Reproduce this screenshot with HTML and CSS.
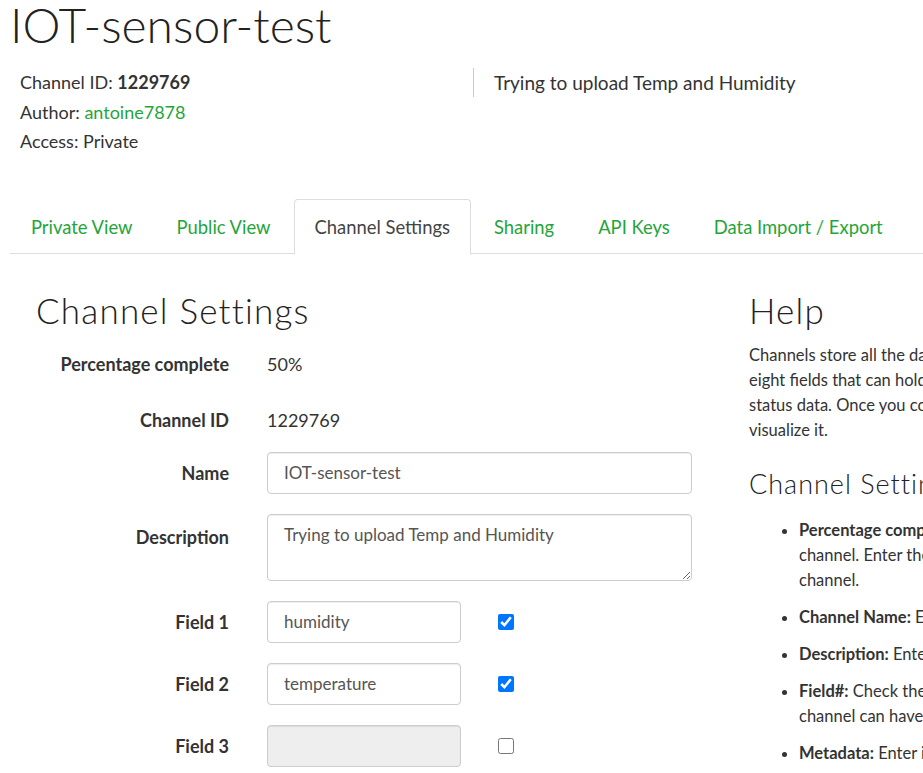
FILE: index.html
```html
<!DOCTYPE html>
<html>
<head>
<meta charset="utf-8">
<link rel="stylesheet" href="styles.css">
</head>
<body>
<div class="page">
  <h1 class="title">IOT-sensor-test</h1>
  <div class="meta">
    <div class="meta-left">
      <p>Channel ID: <b>1229769</b></p>
      <p>Author: <a class="green" href="#">antoine7878</a></p>
      <p>Access: Private</p>
    </div>
    <div class="meta-right">Trying to upload Temp and Humidity</div>
  </div>
  <ul class="tabs">
    <li><a href="#">Private View</a></li>
    <li><a href="#">Public View</a></li>
    <li class="active"><a href="#">Channel Settings</a></li>
    <li><a href="#">Sharing</a></li>
    <li><a href="#">API Keys</a></li>
    <li><a href="#">Data Import / Export</a></li>
  </ul>
  <div class="content">
    <div class="main">
      <h2 class="heading">Channel Settings</h2>
      <div class="row static">
        <label class="lbl">Percentage complete</label>
        <div class="val">50%</div>
      </div>
      <div class="row static last">
        <label class="lbl">Channel ID</label>
        <div class="val">1229769</div>
      </div>
      <div class="row">
        <label class="lbl">Name</label>
        <input class="input wide" type="text" value="IOT-sensor-test">
      </div>
      <div class="row top">
        <label class="lbl">Description</label>
        <textarea class="input wide area">Trying to upload Temp and Humidity</textarea>
      </div>
      <div class="row">
        <label class="lbl">Field 1</label>
        <input class="input short" type="text" value="humidity">
        <input class="check" type="checkbox" checked>
      </div>
      <div class="row">
        <label class="lbl">Field 2</label>
        <input class="input short" type="text" value="temperature">
        <input class="check" type="checkbox" checked>
      </div>
      <div class="row">
        <label class="lbl">Field 3</label>
        <input class="input short" type="text" disabled>
        <input class="check" type="checkbox">
      </div>
    </div>
    <div class="help">
      <h2 class="heading help-heading">Help</h2>
      <p class="help-text">Channels store all the data that a ThingSpeak application collects. Each channel includes<br>eight fields that can hold any type of data, plus three fields for location data and one for<br>status data. Once you collect data in a channel, you can use ThingSpeak apps to analyze and<br>visualize it.</p>
      <h3 class="subheading">Channel Settings</h3>
      <ul class="help-list">
        <li><b>Percentage complete:</b> Calculated based on data entered into the various fields of a<br>channel. Enter the name, description, location, URL, video, and tags to complete your<br>channel.</li>
        <li><b>Channel Name:</b> Enter a unique name for the ThingSpeak channel.</li>
        <li><b>Description:</b> Enter a description of the ThingSpeak channel.</li>
        <li><b>Field#:</b> Check the box to enable the field, and enter a field name. Each ThingSpeak<br>channel can have up to 8 fields.</li>
        <li><b>Metadata:</b> Enter information about channel data, including JSON, XML, or CSV data.</li>
      </ul>
    </div>
  </div>
</div>
</body>
</html>
```

FILE: styles.css
```css
html, body {
  margin: 0;
  padding: 0;
  overflow: hidden;
  background: #fff;
}
body {
  font-family: Lato, "Open Sans", sans-serif;
  color: #333;
  font-size: 17px;
}
.page {
  width: 1500px;
  padding-left: 10px;
}
.title {
  font-family: Lato, sans-serif;
  font-weight: 300;
  font-size: 48px;
  line-height: 52px;
  margin: -1px 0 0 0;
  padding: 0;
  color: #222;
}
.meta {
  display: flex;
  margin-top: 17px;
  padding-left: 10px;
}
.meta-left {
  width: 453px;
}
.meta-left p {
  margin: 0;
  line-height: 29.5px;
  font-size: 18px;
}
.meta-right {
  border-left: 1px solid #ccc;
  padding-left: 20px;
  font-size: 19px;
  line-height: 29px;
  height: 29px;
}
.green, .tabs li a {
  color: #1fa53a;
  text-decoration: none;
}
.tabs {
  list-style: none;
  margin: 42px 0 0 0;
  padding: 0;
  display: flex;
  border-bottom: 1px solid #ddd;
  height: 54px;
  width: 913px;
}
.tabs li {
  margin-bottom: -1px;
  margin-right: 2px;
}
.tabs li a {
  display: block;
  padding: 0 20px;
  line-height: 54px;
  font-size: 18.4px;
  border: 1px solid transparent;
  border-radius: 4px 4px 0 0;
}
.tabs li.active a {
  color: #444;
  border-color: #ddd;
  border-bottom-color: #fff;
  background: #fff;
}
.content {
  display: flex;
  padding-top: 36px;
}
.main {
  width: 713px;
  flex: none;
}
.heading {
  font-family: Lato, sans-serif;
  font-weight: 300;
  font-size: 35px;
  letter-spacing: 1.2px;
  line-height: 40px;
  margin: 0 0 16px 26px;
  color: #222;
}
.help-heading {
  margin-left: 0;
}
.row {
  display: flex;
  align-items: center;
  margin-bottom: 20px;
}
.row.top {
  align-items: flex-start;
}
.row.top .lbl {
  padding-top: 12px;
}
.row.static {
  height: 36px;
  margin-bottom: 20px;
}
.row.static.last {
  margin-bottom: 14px;
}
.lbl {
  width: 219px;
  text-align: right;
  font-weight: bold;
  padding-right: 38px;
  font-size: 18px;
  color: #333;
}
.val {
  font-size: 18px;
}
.input {
  box-sizing: border-box;
  border: 1px solid #ccc;
  border-radius: 4px;
  height: 42px;
  padding: 0 16px;
  font-family: Lato, sans-serif;
  font-size: 17px;
  color: #555;
  box-shadow: inset 0 1px 1px rgba(0,0,0,0.075);
  margin: 0;
  outline: none;
  background: #fff;
}
.wide {
  width: 425px;
}
.area {
  height: 67px;
  padding-top: 9px;
  line-height: 22px;
  resize: vertical;
}
.short {
  width: 194px;
}
.input:disabled {
  background: #eee;
}
.check {
  width: 16px;
  height: 16px;
  margin: 0 0 0 37px;
  accent-color: #0075ff;
}
.help {
  padding-left: 26px;
  flex: none;
  width: 760px;
}
.help-text {
  margin: -3px 0 0 0;
  font-size: 16.5px;
  line-height: 25px;
  white-space: nowrap;
}
.subheading {
  font-family: Lato, sans-serif;
  font-weight: 300;
  font-size: 27px;
  letter-spacing: 1px;
  line-height: 32px;
  margin: 25px 0 18px 0;
  color: #222;
}
.help-list {
  margin: 0;
  padding-left: 50px;
  font-size: 16.5px;
  line-height: 25px;
  white-space: nowrap;
}
.help-list li {
  margin-bottom: 12px;
}
```
